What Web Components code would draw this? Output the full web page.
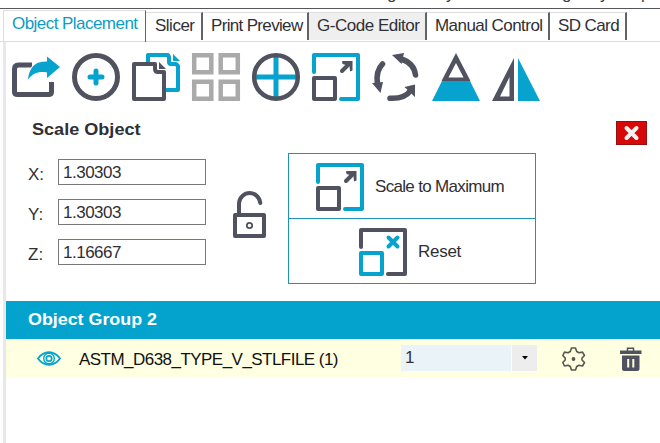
<!DOCTYPE html>
<html lang="en"><head><meta charset="utf-8"><title>Object Placement</title>
<style>
html,body{margin:0;width:660px;height:443px;overflow:hidden;background:#fff}
body{font:17px/20px "Liberation Sans",Arial,sans-serif;color:#2f2f35}
</style></head><body>
<placement-app></placement-app>
<script>
const D='#50535f', B='#05a3ce';
const scale=(outer,inner,mark)=>`<g fill="none" stroke-width="4" stroke-linejoin="round" stroke-linecap="round"><path stroke="${outer}" d="M2 19V2H46V46H29"/><rect stroke="${inner}" x="2" y="25" width="21" height="21"/>${mark}</g>`;
const ICONS={
 share:`<path d="M20 12H6.500Q2.500 12 2.500 16V39Q2.500 41.500 5.500 41.500H36.500Q39.500 41.500 39.500 39V29" fill="none" stroke="${D}" stroke-width="5"/><path d="M16 26.500C18 11 26 8.500 35 8.500V3.500L48 14 35 25V19.500C27 18 21 20 16 26.500Z" fill="${B}" stroke="#fff" stroke-width="2" paint-order="stroke"/>`,
 add:`<circle cx="24" cy="24" r="21.500" fill="none" stroke="${D}" stroke-width="5"/><path d="M24 18V30M18 24H30" stroke="${B}" stroke-width="5" stroke-linecap="round"/>`,
 copy:`<g fill="none" stroke-width="4" stroke-linejoin="round"><path stroke="${B}" d="M16 9V2H36L37 4V9Q37 11 39 11H44L46 13V37H34"/><path stroke="${D}" d="M2 11H23V16Q23 19 26 19H32V46H2Z"/></g><path fill="${B}" d="M41 1L48 8H41Z"/><path fill="${D}" d="M27 9L34 16H27Z"/>`,
 grid:`<g fill="none" stroke="#aaa" stroke-width="4.500"><path d="M2.200 2.200H19.300V19.300H2.200ZM28.700 2.200H45.800V19.300H28.700ZM2.200 28.700H19.300V45.800H2.200ZM28.700 28.700H45.800V45.800H28.700Z"/></g>`,
 center:`<path d="M24 3V45M3 24H45" stroke="${B}" stroke-width="5"/><circle cx="24" cy="24" r="21.800" fill="none" stroke="${D}" stroke-width="4.500"/>`,
 scale:scale(B,D,`<path stroke="${D}" stroke-linejoin="miter" d="M30 18L37 11"/><path fill="${D}" d="M30 8.500Q30 8 31 8H40.500V17.500L38 18.500 37.500 13 30.500 11Z"/>`),
 reset:scale(D,B,`<path stroke="${B}" d="M29.500 9.500L38.500 18.500M38.500 9.500L29.500 18.500"/>`),
 rotate:`<g fill="none" stroke="${D}" stroke-width="5.500" stroke-linecap="round"><path d="M29 6Q42 10 43.500 22"/><path d="M10.500 11Q3.500 18 5.500 31"/><path d="M18 45.300Q33 46 39 37"/></g><path fill="${D}" d="M20 2L32 0 29.500 11ZM0 30L11 29 8.500 40ZM43 31.500V44L32.500 34Z"/>`,
 layer:`<path fill="${B}" d="M10 28H38L48 48H0Z"/><path fill="${D}" fill-rule="evenodd" d="M24 0L38.500 28H9.500ZM24 10L16.500 24.500H31.500Z"/>`,
 mirror:`<path fill="${D}" fill-rule="evenodd" d="M22 5V48H0ZM17.500 24L8 43.500H17.500Z"/><path fill="${B}" d="M26 5V48H48Z"/>`,
 lock:`<g fill="none" stroke="${D}" stroke-width="4"><rect x="2" y="25" width="29" height="21" stroke-linejoin="round"/><path d="M6 25V13A10.700 11 0 0 1 27.300 13" stroke-linecap="round"/><circle cx="16.500" cy="35.500" r="2.700" stroke-width="1.800"/></g>`,
 close:`<rect x=".5" y=".5" width="30" height="23" fill="#d90808" stroke="#941111"/><path d="M10.500 7L20.500 17M20.500 7L10.500 17" stroke="#f3f3f3" stroke-width="4" stroke-linecap="round"/>`,
 eye:`<path d="M1 7.500C7-.8 17-.8 23 7.500C17 15.800 7 15.800 1 7.500Z" fill="none" stroke="${B}" stroke-width="1.900"/><circle cx="12" cy="7.500" r="5.300" fill="none" stroke="${B}" stroke-width="1.400"/><circle cx="12" cy="7.500" r="2.700" fill="none" stroke="${B}" stroke-width="1.700"/>`,
 gear:`<path d="M9.500 1H13.500L14.700 4.500 17 5.800 20.500 5.100 22.500 8.500 20 11V13L22.500 15.500 20.500 19 17 18.200 14.700 19.500 13.500 23H9.500L8.300 19.500 6 18.200 2.500 19 .8 15.500 3.200 13V11L.8 8.500 2.500 5.100 6 5.800 8.300 4.500Z" fill="none" stroke="#555850" stroke-width="1.600" stroke-linejoin="round"/><circle cx="11.500" cy="12" r="1.900" fill="#555850"/>`,
 trash:`<path d="M7.500 4V1.200H13.500V4" fill="none" stroke="${D}" stroke-width="1.500"/><path fill="${D}" d="M0 3.500H21.500V7H0ZM2 8.500H19.500V22Q19.500 24 17.500 24H4Q2 24 2 22Z"/><path d="M8.200 12V20.500M13.300 12V20.500" stroke="#ffffe2" stroke-width="2"/>`
};
const define=(name,html,init)=>customElements.define(name,class extends HTMLElement{
 constructor(){super();this.attachShadow({mode:'open'})}
 connectedCallback(){this.shadowRoot.innerHTML=html;init&&init(this,this.shadowRoot)}
});
// Renders one line spanning the width in "w", by tracking or, with "stretch", by widening the letters.
define('fit-text',`<style>:host{display:inline-block;white-space:nowrap;flex:none}span{display:inline-block;transform-origin:0 0}</style><span></span>`,(h,r)=>{
 const s=r.querySelector('span'),t=h.getAttribute('text'),w=+h.getAttribute('w');s.textContent=t;
 const n=s.getBoundingClientRect().width;
 if(!w||!n)return;
 if(h.hasAttribute('stretch'))s.style.transform=`scaleX(${w/n})`;
 else s.style.letterSpacing=((w-n)/t.length)+'px';
});
define('app-icon',`<style>:host{display:block;flex:none}svg{display:block;overflow:visible}</style><svg></svg>`,(h,r)=>{
 const s=r.querySelector('svg'),[w,t]=(h.getAttribute('size')||'48 48').split(' ');
 s.setAttribute('width',w);s.setAttribute('height',t);s.setAttribute('viewBox',`0 0 ${w} ${t}`);s.innerHTML=ICONS[h.getAttribute('name')];
});
define('app-tab',`<style>:host{display:flex;box-sizing:border-box;height:28px;margin-top:3px;padding:3px 0 0 8px;border-top:1px solid #ddd;border-right:2px solid #62636a;flex:none}
:host([active]){height:32px;margin-top:1px;border-left:1px solid #ddd;color:#0b9dc5;border-right-width:1px}:host([shade]){background:#efefef}</style><slot></slot>`);
define('axis-field',`<style>:host{display:grid;grid-template-columns:30px 148px;height:26px}label{padding-top:6px}div{box-sizing:border-box;border:1px solid #77777c;padding:3px 0 0 4px}</style><label></label><div><slot></slot></div>`,(h,r)=>{r.querySelector('label').textContent=h.getAttribute('axis')});
define('scale-button',`<style>:host{display:flex;box-sizing:border-box;height:66px;border:1px solid #1d93b5;padding:9px 0 0 27px;gap:11px}:host([second]){margin-top:-1px;padding-left:70px}</style><slot name="icon"></slot><slot name="label"></slot>`);
define('count-select',`<style>:host{display:grid;grid-template-columns:110px 25px;gap:1px;height:26px}.v{background:#eaf4f8;padding:3px 0 0 4px;color:#333}.a{background:#ededed;display:grid;place-items:center}svg{display:block}</style><div class="v"><slot></slot></div><div class="a"><svg width="6" height="4"><path d="M0 0H6L3 3.500Z" fill="#000"/></svg></div>`);
define('placement-app',`<style>
:host{display:block;width:660px;height:443px;overflow:hidden}
.head{height:8px;border-bottom:1px solid #55565b;overflow:hidden;position:relative}
.head span{position:absolute;top:-16px;color:#3b3b40}
.tabs{display:flex;height:33px;padding-left:3px;box-sizing:border-box;border-bottom:1px solid #ddd}
.panel{box-sizing:border-box;height:401px;margin-left:3px;border-left:3px solid #e8e8ea}
.tools{display:flex;gap:12px;padding:11px 0 0 6px;height:66px;box-sizing:border-box}
.title{display:flex;justify-content:space-between;height:45px;box-sizing:border-box;padding:12px 13px 0 26px;font-size:16px;font-weight:700}
.form{display:grid;grid-template-columns:178px 27px 34px 21px 248px;padding-left:22px;height:148px}
.fields{display:flex;flex-direction:column;gap:14px;padding-top:6px}
.lock{grid-column:3;padding-top:37px}
.buttons{grid-column:5}
.buttons fit-text{margin-top:14px}
.group{height:38px;background:#04a3ce;color:#fff;font-size:16px;font-weight:700;padding:9px 0 0 22px;box-sizing:border-box}
.row{height:39px;background:#ffffe1;display:grid;grid-template-columns:42px 322px 162px 57px 30px;padding-left:31px;box-sizing:border-box;color:#111}
</style>
<div class="head"><span style="left:387px">g</span><span style="left:446px">y</span><span style="left:562px">g</span><span style="left:600px">y</span><span style="left:641px">p</span></div>
<div class="tabs">
<app-tab active style="width:143px"><fit-text text="Object Placement" w="125.500"></fit-text></app-tab>
<app-tab style="width:57px;padding-left:9px"><fit-text text="Slicer" w="39.500"></fit-text></app-tab>
<app-tab style="width:106px"><fit-text text="Print Preview" w="91.500"></fit-text></app-tab>
<app-tab shade style="width:118px"><fit-text text="G-Code Editor" w="102.500"></fit-text></app-tab>
<app-tab style="width:123px"><fit-text text="Manual Control" w="107.500"></fit-text></app-tab>
<app-tab style="width:77px"><fit-text text="SD Card" w="61"></fit-text></app-tab></div>
<div class="panel">
<div class="tools">${['share','add','copy','grid','center','scale','rotate','layer','mirror'].map(n=>`<app-icon name="${n}"></app-icon>`).join('')}</div>
<div class="title"><fit-text stretch text="Scale Object" w="108.500"></fit-text><app-icon name="close" size="31 24" style="margin-top:1px"></app-icon></div>
<div class="form"><div class="fields"><axis-field axis="X:"><fit-text text="1.30303" w="58"></fit-text></axis-field><axis-field axis="Y:"><fit-text text="1.30303" w="58"></fit-text></axis-field><axis-field axis="Z:"><fit-text text="1.16667" w="58"></fit-text></axis-field></div>
<app-icon class="lock" name="lock" size="33 48"></app-icon>
<div class="buttons"><scale-button><app-icon slot="icon" name="scale"></app-icon><fit-text slot="label" text="Scale to Maximum" w="129"></fit-text></scale-button>
<scale-button second><app-icon slot="icon" name="reset"></app-icon><fit-text slot="label" text="Reset" w="43"></fit-text></scale-button></div></div>
<div class="group"><fit-text stretch text="Object Group 2" w="129"></fit-text></div>
<div class="row"><app-icon name="eye" size="24 15" style="padding-top:12px"></app-icon><fit-text text="ASTM_D638_TYPE_V_STLFILE (1)" w="259" style="padding:11px 0 0"></fit-text><count-select style="margin-top:6px">1</count-select><app-icon name="gear" size="23 24" style="padding-top:8px;margin-left:-1px"></app-icon><app-icon name="trash" size="22 24" style="padding-top:8px"></app-icon></div>
</div>`);
</script></body></html>
